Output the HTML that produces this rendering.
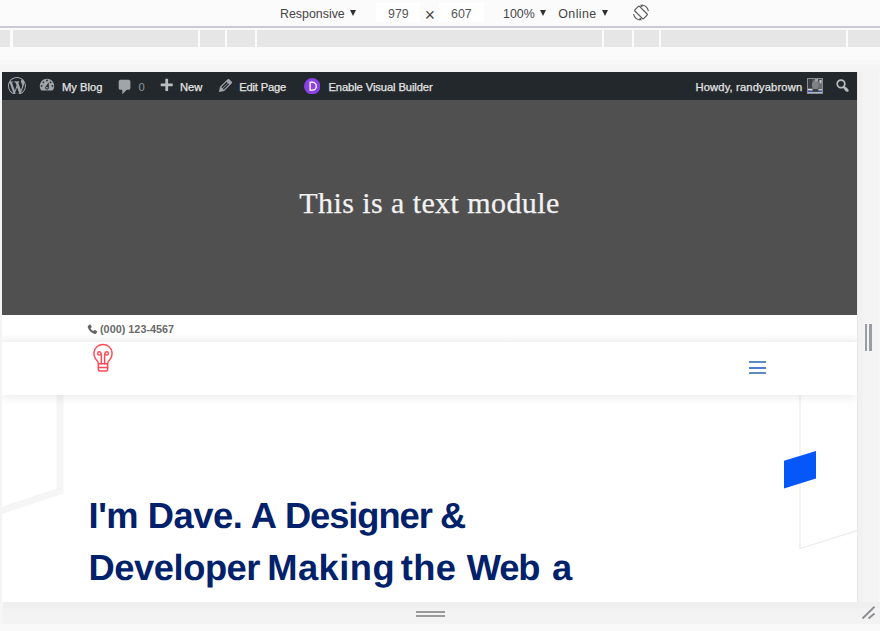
<!DOCTYPE html>
<html lang="en">
<head>
<meta charset="utf-8">
<title>Responsive preview</title>
<style>
html,body{margin:0;padding:0;}
body{width:880px;height:631px;position:relative;overflow:hidden;background:#fafafa;font-family:"Liberation Sans",sans-serif;}
.abs{position:absolute;}
/* devtools device toolbar */
#dt{left:0;top:0;width:880px;height:26px;background:#fbfbfb;}
#dt .t{position:absolute;top:6.800px;font-size:12.4px;line-height:14px;color:#454545;white-space:nowrap;}
#dt .inp{position:absolute;top:3.200px;height:18.700px;background:#fff;}
#dt .tri{position:absolute;width:0;height:0;border-left:3.700px solid transparent;border-right:3.700px solid transparent;border-top:6px solid #303030;top:10px;}
#dtline{left:0;top:26.200px;width:880px;height:1.700px;background:#cacbd2;}
#mq{left:0;top:30px;width:880px;height:16.800px;background:#e6e6e6;}
#mq i{position:absolute;top:0;width:2.400px;height:17px;background:#fbfbfb;}
#below{left:0;top:47px;width:880px;height:25px;background:#fbfbfb;}
/* gutters */
#rg{left:857px;top:72px;width:23px;height:552px;background:linear-gradient(90deg,#e7e8ea 0,#e7e8ea 1px,#f1f1f1 1px,#f1f1f1 5px,#f4f4f4 6px,#f4f4f4 22px,#f8f8f8 22px);}
#bg{left:2.700px;top:602px;width:877.300px;height:22px;background:linear-gradient(#efefef 0,#efefef 27%,#f2f2f2 30%,#f3f3f3 100%);}
#bb{left:0;top:624px;width:880px;height:7px;background:#f9f9f9;}
/* page */
#page{left:2px;top:72px;width:855px;height:530px;background:#fff;overflow:hidden;}
#wpbar{left:0;top:0;width:855px;height:28px;background:#23282d;color:#eee;}
#wpbar .t{position:absolute;top:8.700px;font-size:11.2px;line-height:13px;color:#e4e4e4;white-space:nowrap;-webkit-text-stroke:.25px #e4e4e4;}
#wpbar svg{position:absolute;}
#dark{left:0;top:28px;width:855px;height:215px;background:#505050;}
#dark .h{position:absolute;left:0;width:855px;text-align:center;top:85.800px;font-family:"Liberation Serif",serif;font-size:30px;letter-spacing:.42px;line-height:34px;color:#f2f2f2;-webkit-text-stroke:.25px #f2f2f2;white-space:nowrap;}
#tophdr{left:0;top:243px;width:855px;height:27px;background:linear-gradient(#fff 0,#fff 68%,#f7f7f7 100%);}
#tophdr .ph{position:absolute;left:98px;top:7.900px;font-size:10.85px;font-weight:bold;color:#6a6a6a;line-height:12px;white-space:nowrap;}
#mainhdr{left:0;top:270px;width:855px;height:53px;background:#fff;box-shadow:0 2px 10px rgba(0,0,0,.09);z-index:3;}
#hero{left:0;top:323px;width:855px;height:207px;background:#fff;}
#hero .h1{position:absolute;left:86.500px;top:95.200px;font-size:36.3px;letter-spacing:-.44px;line-height:52.1px;text-rendering:geometricPrecision;font-weight:bold;color:#02216b;white-space:nowrap;}
#w4{letter-spacing:-1.06px}#w5{margin-left:-1.4px}#w7{margin-left:-2.5px;letter-spacing:.46px}#w8{margin-left:-4px;letter-spacing:.45px}#w9{margin-left:.7px;letter-spacing:-1.2px}#w10{margin-left:3.2px}
</style>
</head>
<body>
<div id="dt" class="abs">
  <span class="t" style="left:280px">Responsive</span><span class="tri" style="left:349.800px"></span>
  <span class="inp" style="left:376.200px;width:43.800px"></span><span class="t" style="left:388px;color:#555">979</span>
  <span class="t" style="left:424.700px;font-size:17.500px;top:7.700px">×</span>
  <span class="inp" style="left:439.100px;width:44.600px"></span><span class="t" style="left:451px;color:#555">607</span>
  <span class="t" style="left:503px">100%</span><span class="tri" style="left:540.300px"></span>
  <span class="t" style="left:558.300px;letter-spacing:.42px">Online</span><span class="tri" style="left:602.300px"></span>
  <svg class="abs" style="left:632px;top:4px" width="18" height="18" viewBox="0 0 18 18"><g fill="none" stroke="#555" stroke-width="1.15"><rect x="5.75" y="2.3" width="6.5" height="12.4" rx=".8" transform="rotate(-45 9 8.5)"/><path d="M10 1A7.600 7.600 0 0 1 16.400 7M1.600 10A7.600 7.600 0 0 0 8 16"/></g><path fill="#555" d="M8.600 .2l3 1.700-3 1.300zM9.400 16.800l-3-1.700 3-1.300z"/></svg>
</div>
<div id="dtline" class="abs"></div>
<div id="mq" class="abs"><i style="left:10.200px"></i><i style="left:197.700px"></i><i style="left:224.900px"></i><i style="left:255px"></i><i style="left:601.700px"></i><i style="left:631.700px"></i><i style="left:659px"></i><i style="left:846px"></i></div>
<div id="below" class="abs"></div><div class="abs" style="left:0;top:60px;width:880px;height:12px;background:linear-gradient(#f8f8f8,#f4f4f4)"></div>
<div id="rg" class="abs"></div><div class="abs" style="left:0;top:72px;width:2px;height:530px;background:#f4f4f4"></div><div class="abs" style="left:0;top:602px;width:2.700px;height:22px;background:#f6f6f6"></div>
<div id="bg" class="abs"></div>
<div id="bb" class="abs"></div>

<div id="page" class="abs">
  <div id="wpbar" class="abs">
    <svg style="left:6px;top:4.600px" width="17.900" height="17.900" viewBox="0 0 20 20"><path fill="#a0a5aa" d="M20 10c0-5.51-4.49-10-10-10C4.48 0 0 4.49 0 10c0 5.52 4.48 10 10 10 5.51 0 10-4.48 10-10zM7.78 15.37L4.37 6.22c.55-.02 1.17-.08 1.17-.08.5-.06.44-1.13-.06-1.11 0 0-1.45.11-2.37.11-.18 0-.37 0-.58-.01C4.12 2.69 6.87 1.11 10 1.11c2.33 0 4.45.87 6.05 2.34-.68-.11-1.65.39-1.65 1.58 0 .74.45 1.36.9 2.1.35.61.55 1.36.55 2.46 0 1.49-1.4 5-1.4 5l-3.03-8.37c.54-.02.82-.17.82-.17.5-.05.44-1.25-.06-1.22 0 0-1.44.12-2.38.12-.87 0-2.33-.12-2.33-.12-.5-.03-.56 1.2-.06 1.22l.92.08 1.26 3.41zM17.41 10c.24-.64.74-1.87.43-4.25.7 1.29 1.05 2.71 1.05 4.25 0 3.29-1.73 6.24-4.4 7.78.97-2.59 1.94-5.2 2.92-7.78zM6.1 18.09C3.12 16.65 1.11 13.53 1.11 10c0-1.3.23-2.48.72-3.59C3.25 10.3 4.67 14.2 6.1 18.09zm4.03-6.63l2.58 6.98c-.86.29-1.76.45-2.71.45-.79 0-1.57-.11-2.29-.33.81-2.38 1.62-4.74 2.42-7.1z"/></svg>
    <svg style="left:36.200px;top:4.200px" width="18" height="18" viewBox="0 0 20 20"><path fill="#a0a5aa" d="M3.76 16h12.48c1.1-1.37 1.76-3.11 1.76-5 0-4.42-3.58-8-8-8s-8 3.58-8 8c0 1.89.66 3.63 1.76 5zM10 4c.55 0 1 .45 1 1s-.45 1-1 1-1-.45-1-1 .45-1 1-1zM6 6c.55 0 1 .45 1 1s-.45 1-1 1-1-.45-1-1 .45-1 1-1zm8 0c.55 0 1 .45 1 1s-.45 1-1 1-1-.45-1-1 .45-1 1-1zm-5.37 5.55L12 7v6c0 1.1-.9 2-2 2s-2-.9-2-2c0-.57.24-1.08.63-1.45zM4 10c.55 0 1 .45 1 1s-.45 1-1 1-1-.45-1-1 .45-1 1-1zm12 0c.55 0 1 .45 1 1s-.45 1-1 1-1-.45-1-1 .45-1 1-1zm-5 3c0-.55-.45-1-1-1s-1 .45-1 1 .45 1 1 1 1-.45 1-1z"/></svg>
    <span class="t" style="left:60px">My Blog</span>
    <svg style="left:114.100px;top:5.500px" width="18" height="18" viewBox="0 0 20 20"><path fill="#a0a5aa" d="M5 2h9c1.1 0 2 .9 2 2v7c0 1.1-.9 2-2 2h-2l-5 5v-5H5c-1.1 0-2-.9-2-2V4c0-1.1.9-2 2-2z"/></svg>
    <span class="t" style="left:136.500px;color:#8f949a;-webkit-text-stroke:0">0</span>
    <svg style="left:155.200px;top:5.400px" width="18.5" height="18.5" viewBox="0 0 20 20"><path fill="#b9bcc0" d="M17 7v3h-5v5H9v-5H4V7h5V2h3v5h5z"/></svg>
    <span class="t" style="left:178px">New</span>
    <svg style="left:213.700px;top:3.700px" width="19" height="19" viewBox="0 0 20 20"><path fill="#a0a5aa" d="M13.89 3.39l2.71 2.72c.46.46.42 1.24.03 1.64l-8.01 8.02-5.56 1.16 1.16-5.58s7.6-7.63 7.99-8.03c.39-.39 1.22-.39 1.68.07zm-2.73 2.79l-5.59 5.61 1.11 1.11 5.54-5.65zm-2.97 8.23l5.58-5.6-1.07-1.08-5.59 5.6z"/></svg>
    <span class="t" style="left:237.300px;letter-spacing:-.2px">Edit Page</span>
    <svg style="left:301.800px;top:5.500px" width="16.4" height="16.4" viewBox="0 0 16 16"><circle cx="8" cy="8" r="8" fill="#8b3fe6"/><path fill="none" stroke="#fff" stroke-width="1.35" d="M6 4.2h2.2a3.8 3.8 0 0 1 0 7.6H6z"/></svg>
    <span class="t" style="left:326.500px;letter-spacing:-.1px">Enable Visual Builder</span>
    <span class="t" style="left:693.500px;letter-spacing:.14px">Howdy, randyabrown</span>
    <svg style="left:805px;top:6px" width="16" height="16" viewBox="0 0 16 16"><defs><filter id="ab" x="-10%" y="-10%" width="120%" height="120%"><feGaussianBlur stdDeviation=".45"/></filter><clipPath id="ac"><rect x="1" y="1" width="14" height="14"/></clipPath></defs><rect width="16" height="16" fill="#8a8d91"/><g clip-path="url(#ac)"><rect x="1" y="1" width="14" height="14" fill="#4c4f53"/><g filter="url(#ab)"><rect x="1" y="1" width="4" height="9" fill="#3a3d41"/><ellipse cx="8.500" cy="7" rx="3.600" ry="5" fill="#7f8286"/><rect x="8" y="1" width="3" height="2.500" fill="#9b9ea2"/><rect x="12.500" y="2" width="2" height="3.500" fill="#c9ccd0"/><rect x="11.500" y="6" width="3.500" height="4" fill="#6a6d71"/><rect x="1" y="10.800" width="4.500" height="1.600" fill="#d4d7db"/><rect x="11.500" y="10.800" width="3.500" height="1.600" fill="#c4c7cb"/><rect x="6" y="11" width="5" height="3" fill="#3c3f43"/><rect x="1" y="13" width="4.600" height="1.300" fill="#2f57bd"/><rect x="11" y="13" width="4" height="1.300" fill="#2f57bd"/><rect x="1" y="14.300" width="14" height=".7" fill="#e4e6e8"/></g></g></svg>
    <svg style="left:832px;top:5px" width="17" height="17" viewBox="0 0 20 20"><path fill="#b6babf" d="M12.14 4.18c1.87 1.87 2.11 4.75.72 6.89.12.1.22.21.36.31.2.16.47.36.81.59.34.24.56.39.66.47.42.31.73.57.94.78.32.32.6.65.84 1 .25.35.44.69.59 1.04.14.35.21.68.18 1-.02.32-.14.59-.36.81s-.49.34-.81.36c-.31.02-.65-.04-.99-.19-.35-.14-.7-.34-1.04-.59-.35-.24-.68-.52-1-.84-.21-.21-.47-.52-.77-.93-.1-.13-.25-.35-.47-.66-.22-.32-.4-.57-.56-.78-.16-.2-.29-.35-.44-.5-2.07 1.09-4.69.76-6.44-.98-2.14-2.15-2.14-5.64 0-7.79 2.15-2.15 5.64-2.15 7.78 0zm-1.410 6.360c1.360-1.370 1.360-3.580 0-4.950-1.370-1.370-3.590-1.370-4.950 0-1.370 1.370-1.370 3.580 0 4.950 1.360 1.370 3.580 1.370 4.950 0z"/></svg>
  </div>
  <div id="dark" class="abs"><div class="h">This is a text module</div></div>
  <div id="tophdr" class="abs">
    <svg class="abs" style="left:85.300px;top:8.900px" width="11.300" height="11.300" viewBox="0 0 10 10"><path fill="#666" d="M2.1.6c.3-.3.8-.3 1 .1l1 1.600c.2.300.1.700-.2.900l-.7.600c.5 1.100 1.400 2 2.500 2.500l.6-.7c.2-.3.600-.4.900-.2l1.600 1c.4.200.4.700.1 1l-.8.900c-.5.500-1.200.7-1.900.4C3.700 7.700 1.800 5.800.800 3.300.5 2.600.7 1.900 1.200 1.400z"/></svg>
    <span class="ph">(000) 123-4567</span>
  </div>
  <div id="mainhdr" class="abs">
    <svg class="abs" style="left:88px;top:-2px" width="26" height="36" viewBox="90 340 26 36"><g fill="none" stroke="#ff4a57" stroke-width="1.5" stroke-linecap="round" stroke-linejoin="round"><path d="M98.350 363.800Q98.200 361.200 95.550 358.720A9.100 9.100 0 1 1 110.450 358.720Q107.800 361.200 107.650 363.800"/><path d="M98.350 363.800H107.650V369.600Q107.650 371.100 106.150 371.100H99.850Q98.350 371.100 98.350 369.600Z"/><path d="M98.350 367.500H107.650"/><circle cx="99.300" cy="353.400" r="1.650"/><circle cx="106.700" cy="353.400" r="1.650"/><path d="M101.350 354.200V363.800M104.650 354.200V363.800"/></g></svg>
    <div class="abs" style="left:746.700px;top:19px;width:17.300px;height:2px;background:#5b8cc2"></div>
    <div class="abs" style="left:746.700px;top:25px;width:17.300px;height:1.800px;background:#4c80cf"></div>
    <div class="abs" style="left:746.700px;top:30px;width:17.300px;height:2px;background:#5b8cc2"></div>
  </div>
  <div id="hero" class="abs">
    <svg class="abs" style="left:0;top:0" width="855" height="207" viewBox="0 0 855 207">
      <path d="M58 -4V96L-2 116" fill="none" stroke="#f5f5f5" stroke-width="7"/>
      <path d="M798 0V153.500L855 135.500" fill="none" stroke="#ebebeb" stroke-width="1.200"/>
      <path d="M782 65.700L814 56V83.500L782 93.400z" fill="#0657f9"/>
    </svg>
    <div class="h1"><span id="w1">I'm</span> <span id="w2">Dave.</span> <span id="w3">A</span> <span id="w4">Designer</span> <span id="w5">&amp;</span><br><span id="w6">Developer</span> <span id="w7">Making</span> <span id="w8">the</span> <span id="w9">Web</span> <span id="w10">a</span></div>
  </div>
</div>

<!-- resize handles -->
<div class="abs" style="left:864.500px;top:323.500px;width:2.500px;height:27.500px;background:#9b9da5"></div>
<div class="abs" style="left:869px;top:323.500px;width:2.500px;height:27.500px;background:#9b9da5"></div>
<div class="abs" style="left:416px;top:611px;width:29px;height:1.600px;background:#999"></div>
<div class="abs" style="left:416px;top:615px;width:29px;height:1.600px;background:#999"></div>
<svg class="abs" style="left:858px;top:602px" width="22" height="22" viewBox="0 0 22 22"><path d="M4.500 16.500L16.500 4.700M10.500 16.500L16.500 11.500" stroke="#8c8e94" stroke-width="1.900" fill="none"/></svg>
</body>
</html>
